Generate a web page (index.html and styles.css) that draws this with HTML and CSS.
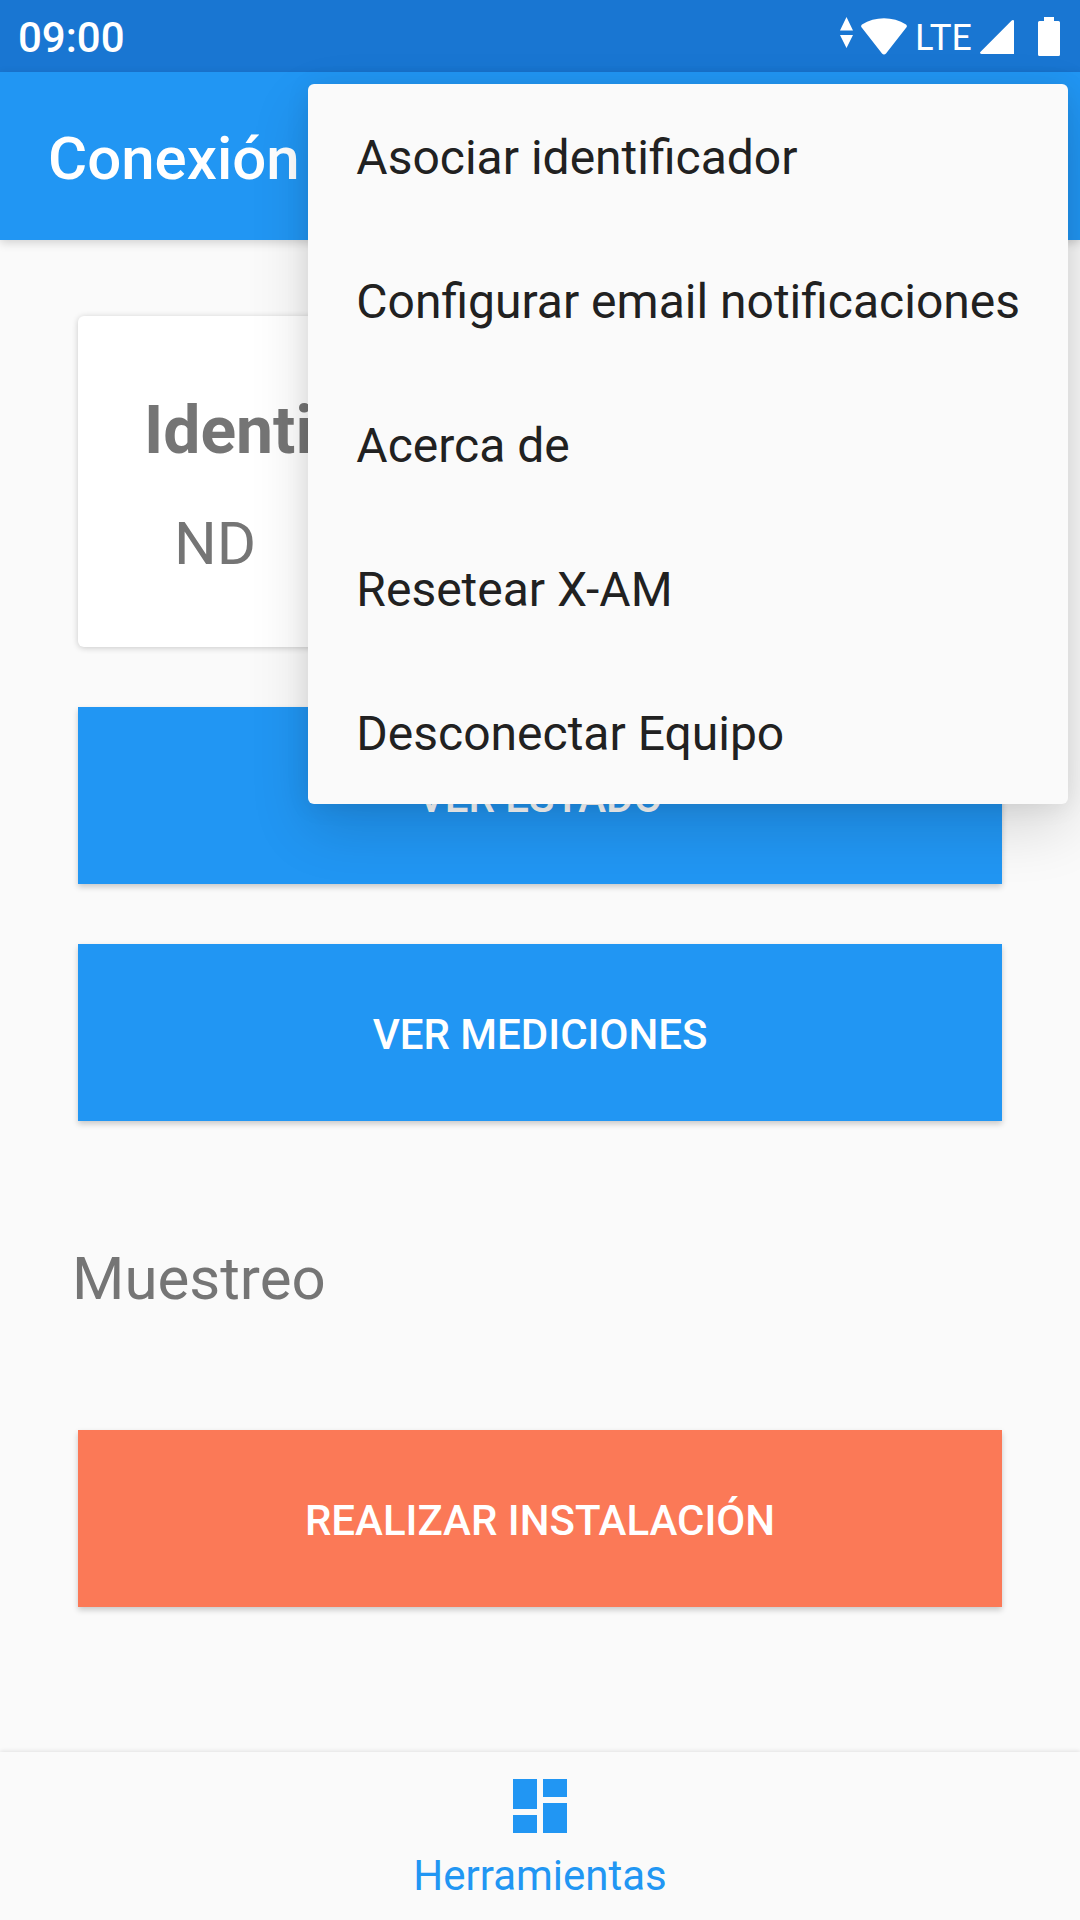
FILE: index.html
```html
<!DOCTYPE html>
<html lang="es">
<head>
    <meta charset="UTF-8">
    <meta name="viewport" content="width=device-width, initial-scale=1.0">
    <title>Conexión</title>
    <link rel="stylesheet" href="styles.css">
</head>
<body>
    <div class="status-bar">
        <span class="clock">09:00</span>
        <div class="status-icons">
            <svg class="data-icon" width="13" height="31" viewBox="0 0 13 31"><path d="M6.500 0 13 13.500H0zM6.500 31 0 18h13z"/></svg>
            <svg class="wifi-icon" width="46" height="37" viewBox="0 0 46 37"><path d="M.7 9.500C-.2 8.500 0 7.300 1 6.600 14-1.800 32-1.800 45 6.600c1 .7 1.200 1.900.3 2.900L25 35.500c-1.200 1.400-2.800 1.400-4 0z"/></svg>
            <span class="network">LTE</span>
            <svg class="signal-icon" width="34" height="34" viewBox="0 0 34 34"><path d="M34 1.500V34H1.500C0 34-.4 32.700.6 31.700L31.700.6C32.700-.4 34 0 34 1.500z"/></svg>
            <svg class="battery-icon" width="22" height="39" viewBox="0 0 22 39"><path d="M6 0h10v4h4.500A1.500 1.500 0 0 1 22 5.500v32a1.500 1.500 0 0 1-1.500 1.500h-19A1.500 1.500 0 0 1 0 37.500v-32A1.500 1.500 0 0 1 1.500 4H6z"/></svg>
        </div>
    </div>

    <header class="app-bar">
        <h1>Conexión</h1>
    </header>

    <main class="content">
        <section class="card">
            <h2>Identificador</h2>
            <p>ND</p>
        </section>
        <button class="btn" type="button">VER ESTADO</button>
        <button class="btn" type="button">VER MEDICIONES</button>
        <h3 class="section-title">Muestreo</h3>
        <button class="btn btn-install" type="button">REALIZAR INSTALACIÓN</button>
    </main>

    <nav class="bottom-nav">
        <a href="#">
            <svg width="54" height="54" viewBox="0 0 54 54"><path d="M0 0h24v30H0zM30 0h24v18H30zM0 36h24v18H0zM30 24h24v30H30z"/></svg>
            <span>Herramientas</span>
        </a>
    </nav>

    <!-- Overflow menu -->
    <div class="menu" role="menu">
        <button type="button" role="menuitem">Asociar identificador</button>
        <button type="button" role="menuitem">Configurar email notificaciones</button>
        <button type="button" role="menuitem">Acerca de</button>
        <button type="button" role="menuitem">Resetear X-AM</button>
        <button type="button" role="menuitem">Desconectar Equipo</button>
    </div>
</body>
</html>
```
FILE: styles.css
```css
* {
    margin: 0;
    padding: 0;
    box-sizing: border-box;
}

body {
    display: flex;
    flex-direction: column;
    min-height: 100vh;
    position: relative;
    font-family: Roboto, sans-serif;
    background: #fafafa;
    color: #757575;
}

button {
    border: none;
    font-family: inherit;
    cursor: pointer;
}

svg {
    display: block;
    fill: currentColor;
}

/* Status bar */
.status-bar {
    display: flex;
    justify-content: space-between;
    height: 72px;
    padding: 0 20px 0 18px;
    background: #1976d2;
    color: white;
}

.clock {
    padding-top: 2px;
    font-size: 42px;
    font-weight: 500;
    line-height: 72px;
}

.status-icons {
    display: flex;
    align-items: center;
}

.data-icon {
    margin-right: 8px;
    margin-bottom: 8px;
}

.wifi-icon {
    margin-right: 8px;
}

.network {
    font-family: Lato, Roboto, sans-serif;
    font-size: 36px;
}

.signal-icon {
    margin: 2px 24px 0 8px;
}

/* App bar */
.app-bar {
    position: relative;
    height: 168px;
    padding: 3px 48px 0;
    background: #2196f3;
    box-shadow: 0 3px 9px rgba(0, 0, 0, 0.16);
}

.app-bar h1 {
    color: white;
    font-size: 60px;
    font-weight: 500;
    line-height: 168px;
}

/* Content */
.content {
    display: flex;
    flex-direction: column;
    flex: 1;
    gap: 60px;
    padding: 76px 78px;
}

.card {
    padding: 76px 66px 68px;
    background: white;
    border-radius: 6px;
    box-shadow: 0 1px 6px rgba(0, 0, 0, 0.2);
}

.card h2 {
    margin-bottom: 38px;
    font-size: 66px;
    font-weight: 700;
    line-height: 78px;
}

.card p {
    padding-left: 30px;
    font-size: 60px;
    line-height: 71px;
}

.btn {
    height: 177px;
    padding-top: 3px;
    background: #2196f3;
    color: white;
    font-size: 42px;
    font-weight: 500;
    box-shadow: 0 3px 6px rgba(0, 0, 0, 0.2);
}

.btn-install {
    background: #fb7957;
}

.section-title {
    margin: 63px -6px 56px;
    font-size: 60px;
    font-weight: 400;
    line-height: 70px;
}

/* Bottom navigation */
.bottom-nav {
    height: 168px;
    background: #fafafa;
    box-shadow: 0 -1px 4px rgba(0, 0, 0, 0.1);
}

.bottom-nav a {
    display: flex;
    flex-direction: column;
    align-items: center;
    gap: 18px;
    padding-top: 27px;
    color: #2196f3;
    font-size: 42px;
    line-height: 50px;
    text-decoration: none;
}

/* Overflow menu */
.menu {
    position: absolute;
    top: 84px;
    right: 12px;
    display: flex;
    flex-direction: column;
    background: #fafafa;
    border-radius: 6px;
    box-shadow: 0 24px 60px rgba(0, 0, 0, 0.14), 0 2px 24px rgba(0, 0, 0, 0.08);
}

.menu button {
    height: 144px;
    padding: 3px 48px 0;
    background: none;
    color: #212121;
    font-size: 48px;
    text-align: left;
    white-space: nowrap;
}
```
